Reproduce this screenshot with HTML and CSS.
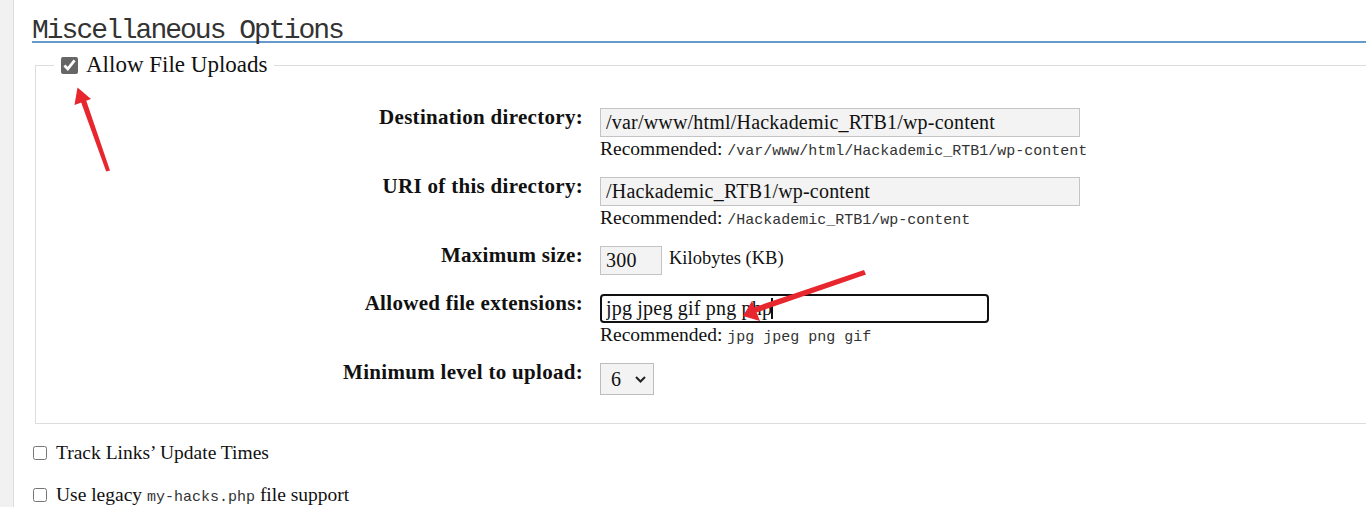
FILE: index.html
```html
<!DOCTYPE html>
<html lang="en">
<head>
<meta charset="utf-8">
<title>Miscellaneous Options</title>
<link rel="stylesheet" href="styles.css">
</head>
<body>
<div class="page">
  <aside class="rail"></aside>
  <main class="main">
    <h2 class="section-title">Miscellaneous Options</h2>

    <fieldset class="uploads">
      <legend class="uploads-legend">
        <label class="legend-label"><input type="checkbox" class="cb-big" checked> <span>Allow File Uploads</span></label>
      </legend>

      <div class="form-grid">
        <div class="form-row">
          <label class="form-label" for="dest">Destination directory:</label>
          <div class="form-field">
            <input id="dest" class="text-input wide" type="text" value="/var/www/html/Hackademic_RTB1/wp-content">
            <div class="hint">Recommended: <code>/var/www/html/Hackademic_RTB1/wp-content</code></div>
          </div>
        </div>

        <div class="form-row">
          <label class="form-label" for="uri">URI of this directory:</label>
          <div class="form-field">
            <input id="uri" class="text-input wide" type="text" value="/Hackademic_RTB1/wp-content">
            <div class="hint">Recommended: <code>/Hackademic_RTB1/wp-content</code></div>
          </div>
        </div>

        <div class="form-row size-row">
          <label class="form-label" for="size">Maximum size:</label>
          <div class="form-field inline">
            <input id="size" class="text-input small" type="text" value="300">
            <span class="unit">Kilobytes (KB)</span>
          </div>
        </div>

        <div class="form-row">
          <label class="form-label" for="ext">Allowed file extensions:</label>
          <div class="form-field">
            <div class="focus-wrap">
              <input id="ext" class="text-input focused" type="text" value="jpg jpeg gif png php">
              <span class="caret"></span>
            </div>
            <div class="hint">Recommended: <code>jpg jpeg png gif</code></div>
          </div>
        </div>

        <div class="form-row">
          <label class="form-label" for="level">Minimum level to upload:</label>
          <div class="form-field">
            <div class="select-box">
              <select id="level" class="select">
                <option>6</option>
              </select>
              <svg class="chevron" width="11" height="7" viewBox="0 0 11 7"><path d="M1 1 L5.5 5.5 L10 1" fill="none" stroke="#222" stroke-width="2"/></svg>
            </div>
          </div>
        </div>
      </div>
    </fieldset>

    <div class="option"><label><input type="checkbox" class="cb"> <span>Track Links’ Update Times</span></label></div>
    <div class="option second"><label><input type="checkbox" class="cb"> <span>Use legacy <code>my-hacks.php</code> file support</span></label></div>
  </main>
</div>

<svg class="annotations" width="1366" height="507" viewBox="0 0 1366 507">
  <g fill="#e8262d">
    <polygon points="106.2,171.6 110,170.4 86,100 81,102"/>
    <polygon points="77.5,87.5 74.5,105 91,99"/>
    <polygon points="864,270 866,274.5 755,313 752,308"/>
    <polygon points="743,316 752,301 760,321"/>
  </g>
</svg>
</body>
</html>
```

FILE: styles.css
```css
html, body {
  margin: 0;
  padding: 0;
  background: #fff;
}

body {
  font-family: "Liberation Serif", "Times New Roman", serif;
  color: #111;
  overflow: hidden;
  height: 507px;
  position: relative;
}

.page {
  display: flex;
  min-height: 507px;
}

.rail {
  width: 13px;
  flex: none;
  background: #f1f1f1;
  border-right: 1px solid #dcdcdc;
}

.main {
  flex: 1;
  padding-left: 18px;
  overflow: hidden;
}

.section-title {
  margin: 0;
  padding-top: 20px;
  font-family: "Liberation Mono", monospace;
  font-weight: normal;
  font-size: 28px;
  letter-spacing: -2px;
  line-height: 21px;
  color: #333;
  border-bottom: 2px solid #6699cc;
}

.uploads {
  margin: 9px -20px 0 3px;
  padding: 0 0 28px 0;
  border: 1px solid #dddddd;
}

.uploads-legend {
  margin-left: 18px;
  padding: 0 7px;
}

.legend-label {
  display: flex;
  align-items: center;
  gap: 8px;
  font-size: 23px;
  line-height: 26px;
}

.cb-big {
  width: 17px;
  height: 17px;
  margin: 0;
  accent-color: #666;
}

.form-grid {
  display: flex;
  flex-direction: column;
  gap: 17px;
  margin-top: 30px;
}

.form-row {
  display: grid;
  grid-template-columns: 547px 1fr;
  column-gap: 17px;
  align-items: start;
}

.size-row {
  padding-bottom: 2px;
}

.form-label {
  text-align: right;
  font-weight: bold;
  font-size: 21px;
  letter-spacing: 0.3px;
  line-height: 22px;
  margin-top: -2px;
}

.form-field.inline {
  display: flex;
  align-items: center;
  gap: 7px;
}

.text-input {
  box-sizing: border-box;
  height: 29px;
  margin: 0;
  padding: 0 5px;
  font-family: "Liberation Serif", serif;
  font-size: 20px;
  letter-spacing: 0.2px;
  color: #111;
  background: #f3f3f3;
  border: 1px solid #c4c4c4;
  border-radius: 0;
  outline: none;
  display: block;
}

.text-input.wide {
  width: 480px;
}

.text-input.small {
  width: 62px;
}

.unit {
  font-size: 18.5px;
  line-height: 22px;
  margin-top: -6px;
}

.focus-wrap {
  position: relative;
  width: 389px;
}

.text-input.focused {
  width: 389px;
  background: #fff;
  border: 2px solid #111;
  border-radius: 4px;
  padding: 0 4px;
}

.caret {
  position: absolute;
  left: 171px;
  top: 4px;
  width: 2px;
  height: 21px;
  background: #111;
}

.hint {
  margin-top: 1px;
  height: 22px;
  font-size: 19.5px;
  line-height: 22px;
  color: #111;
  white-space: nowrap;
}

.hint code {
  font-family: "Liberation Mono", monospace;
  font-size: 15px;
  line-height: 1;
  color: #333;
}

.select-box {
  box-sizing: border-box;
  width: 54px;
  height: 32px;
  display: flex;
  align-items: center;
  background: #f3f3f3;
  border: 1px solid #bdbdbd;
}

.select {
  appearance: none;
  -webkit-appearance: none;
  border: 0;
  background: transparent;
  font-family: "Liberation Serif", serif;
  font-size: 20px;
  color: #111;
  padding: 0 0 0 10px;
  width: 32px;
  outline: none;
}

.chevron {
  margin-left: 2px;
}

.option {
  margin-top: 16px;
  margin-left: 1px;
  font-size: 19.5px;
  line-height: 26px;
  height: 26px;
}

.option label {
  display: flex;
  align-items: center;
  gap: 9px;
}

.option.second {
  margin-top: 16px;
}

.option code {
  font-family: "Liberation Mono", monospace;
  font-size: 15px;
  line-height: 1;
  color: #333;
}

.cb {
  width: 14px;
  height: 14px;
  margin: 0;
}

.annotations {
  position: absolute;
  left: 0;
  top: 0;
  pointer-events: none;
}
```
